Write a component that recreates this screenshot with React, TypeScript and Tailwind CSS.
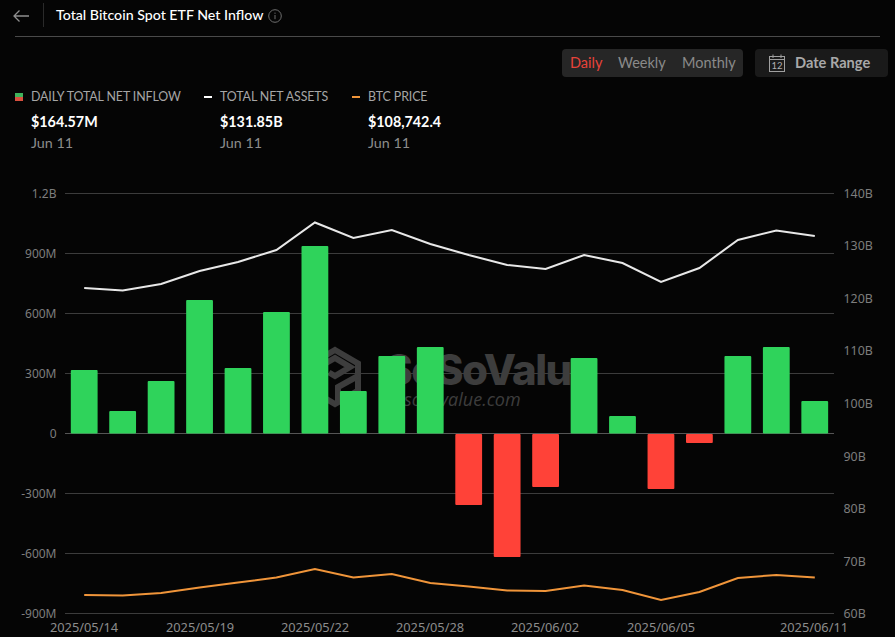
const band = 38.45;
const cx = (i: number) => 84.2 + band * i;
const zero = 433.5;
const bars = [370, 411, 381, 300, 368, 312, 246, 391, 356, 347, 505, 557, 487, 358, 416, 489, 443, 356, 347, 401];
const white = [288, 290.5, 284, 271, 262, 250, 222.5, 238, 230, 244, 255, 265, 269, 255, 263, 282, 268, 240, 230.5, 236];
const orange = [595, 595.5, 593, 587.5, 582.5, 577.5, 569, 577.5, 574, 583, 586.5, 590.5, 591, 585.5, 590, 600, 592, 578, 575, 577.5];
const leftTicks = ["1.2B", "900M", "600M", "300M", "0", "-300M", "-600M", "-900M"];
const rightTicks = ["140B", "130B", "120B", "110B", "100B", "90B", "80B", "70B", "60B"];
const dates: [string, number][] = [["2025/05/14", 84], ["2025/05/19", 200], ["2025/05/22", 315], ["2025/05/28", 430], ["2025/06/02", 545], ["2025/06/05", 661], ["2025/06/11", 814]];
const pts = (a: number[]) => a.map((y, i) => `${cx(i).toFixed(1)},${y}`).join(" ");

function Legend({ w, marker, label, value }: { w: string; marker: React.ReactNode; label: string; value: string }) {
  return (
    <div className={w}>
      <div className="flex items-center h-[18px]">
        <div className="w-4 flex">{marker}</div>
        <span className="text-[12.4px] text-[#a6a6a6] tracking-[-0.1px]">{label}</span>
      </div>
      <div className="pl-4 mt-[6px] text-[14.3px] leading-[20px] font-bold text-white">{value}</div>
      <div className="pl-4 mt-[1px] text-[14.3px] leading-[20px] text-[#8c8c8c]">Jun 11</div>
    </div>
  );
}

export default function App() {
  return (
    <div className="w-[895px] h-[637px] overflow-hidden bg-[#050505] font-['Lato',sans-serif]">
      <div className="mx-[15px] h-[37px] border-b border-[#4a4a4a] flex items-center">
        <svg width="16" height="12" viewBox="0 0 16 12" fill="none" stroke="#8f8f8f" strokeWidth="1.3" className="-mt-[5px] -ml-[2px]">
          <path d="M16 6H1M6.500 .5L1 6l5.500 5.500" />
        </svg>
        <div className="w-px h-[24px] bg-[#2a2a2a] ml-[14px] -mt-[7px]" />
        <span className="ml-[12px] -mt-[6px] text-[14.2px] font-medium text-white">Total Bitcoin Spot ETF Net Inflow</span>
        <svg width="14" height="14" viewBox="0 0 14 14" fill="none" stroke="#6e6e6e" className="ml-[5px] -mt-[5px]">
          <circle cx="7" cy="7" r="6.300" />
          <path d="M7 6v4.200M7 3.600v1.200" />
        </svg>
      </div>
      <div className="flex justify-end mt-[12px] mr-[7px] gap-3">
        <div className="h-[28px] w-[181px] rounded bg-[#262626] flex items-center pl-2 text-[14.5px]">
          <span className="text-[#e8433a] w-[48px]">Daily</span>
          <span className="text-[#8a8a8a] w-[64px]">Weekly</span>
          <span className="text-[#8a8a8a]">Monthly</span>
        </div>
        <div className="h-[28px] w-[133px] rounded bg-[#1a1a1a] flex items-center pl-[14px]">
          <svg width="16" height="18" viewBox="0 0 16 18" fill="none" stroke="#a0a0a0" className="-mt-px">
            <rect x=".5" y="2.500" width="15" height="15" />
            <path d="M.5 5.500h15M4 .5v3.500M12 .5v3.500" />
            <text x="8" y="15" textAnchor="middle" fontSize="9.500" fill="#b0b0b0" stroke="none" fontFamily="Lato">12</text>
          </svg>
          <span className="ml-[10px] -mt-px text-[14.6px] font-bold text-[#a8a8a8]">Date Range</span>
        </div>
      </div>
      <div className="flex mt-[11px] ml-[15px]">
        <Legend w="w-[189px]" label="DAILY TOTAL NET INFLOW" value="$164.57M" marker={
          <div className="w-2 h-2 flex flex-col"><div className="h-1 bg-[#3fb35c]" /><div className="h-1 bg-[#d9503f]" /></div>
        } />
        <Legend w="w-[148px]" label="TOTAL NET ASSETS" value="$131.85B" marker={<div className="w-2 h-0.5 bg-white" />} />
        <Legend w="w-[150px]" label="BTC PRICE" value="$108,742.4" marker={<div className="w-2 h-0.5 bg-[#f0953a]" />} />
      </div>
      <svg width="895" height="467" viewBox="0 170 895 467" className="block mt-[17px]" fontFamily="'Noto Sans', sans-serif" fontSize="12">
        {leftTicks.map((t, i) => (
          <g key={t}>
            <line x1="65" x2="834" y1={193.5 + i * 60} y2={193.5 + i * 60} stroke={t === "0" ? "#555" : "#3c3c3c"} />
            <text x="56.500" y={197.5 + i * 60} textAnchor="end" fill="#7d7d7d">{t}</text>
          </g>
        ))}
        {rightTicks.map((t, i) => (
          <text key={t} x="843.500" y={197.5 + i * 52.6} fill="#7d7d7d" fontSize="12.400">{t}</text>
        ))}
        <g fill="none" stroke="#3d3d3d" strokeWidth="6">
          <path d="M335 350l23 13.500v27l-23 13.500-23-13.500v-27z" />
          <path d="M358 376l-20 11v17" />
          <path d="M321 380v-14l14-8 15 9-15 9-6-3.500" />
        </g>
        <g fill="#3d3d3d">
          <text x="385" y="385" fontSize="42" fontWeight="800" fontFamily="Inter, sans-serif" letterSpacing="-1.5">SoSoValue</text>
          <text x="404" y="406" fontSize="18" fontStyle="italic" fontFamily="'Open Sans', sans-serif">sosovalue.com</text>
        </g>
        {bars.map((b, i) => {
          const up = b < zero;
          const y = up ? b : zero + 0.5;
          const h = up ? zero - b : b - zero - 0.5;
          return <rect key={i} x={cx(i) - 13.4} y={y} width="26.800" height={h} rx="1" fill={up ? "#2fd35b" : "#ff4238"} />;
        })}
        <polyline points={pts(white)} fill="none" stroke="#e8e8e8" strokeWidth="2" />
        <polyline points={pts(orange)} fill="none" stroke="#f0953a" strokeWidth="2" />
        {dates.map(([d, x]) => (
          <text key={d} x={x} y="631.500" textAnchor="middle" fill="#8c8c8c" fontSize="12.800">{d}</text>
        ))}
      </svg>
    </div>
  );
}
